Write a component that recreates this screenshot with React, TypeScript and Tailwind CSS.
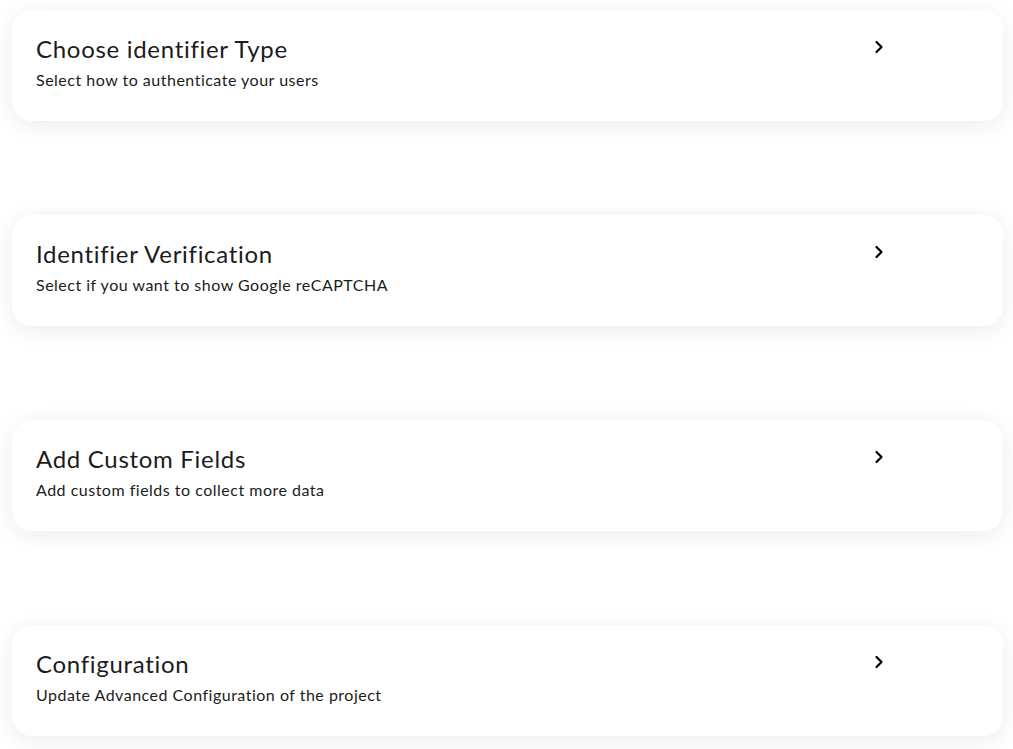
import React from "react";
import { ChevronRight } from "lucide-react";

const items = [
  { title: "Choose identifier Type", desc: "Select how to authenticate your users" },
  { title: "Identifier Verification", desc: "Select if you want to show Google reCAPTCHA" },
  { title: "Add Custom Fields", desc: "Add custom fields to collect more data" },
  { title: "Configuration", desc: "Update Advanced Configuration of the project" },
];

export default function App() {
  return (
    <div
      className="min-h-screen bg-white pt-[10px] pl-[12px] pr-[10px] flex flex-col gap-[94px]"
      style={{ fontFamily: "Lato, 'Noto Sans', sans-serif" }}
    >
      {items.map((it) => (
        <div
          key={it.title}
          className="h-[111px] rounded-[20px] bg-white shadow-[0_4px_24px_rgba(0,0,0,0.08)] flex pl-[24px] pr-[114px] pt-[23px]"
        >
          <div className="flex-1">
            <div className="text-[24px] leading-[32px] tracking-[0.7px] text-[#1c1c1c]">{it.title}</div>
            <div className="text-[16px] leading-[20px] mt-[5px] tracking-[0.5px] text-[#1c1c1c]">{it.desc}</div>
          </div>
          <ChevronRight size={20} strokeWidth={2.6} className="text-black mt-[4px]" />
        </div>
      ))}
    </div>
  );
}
